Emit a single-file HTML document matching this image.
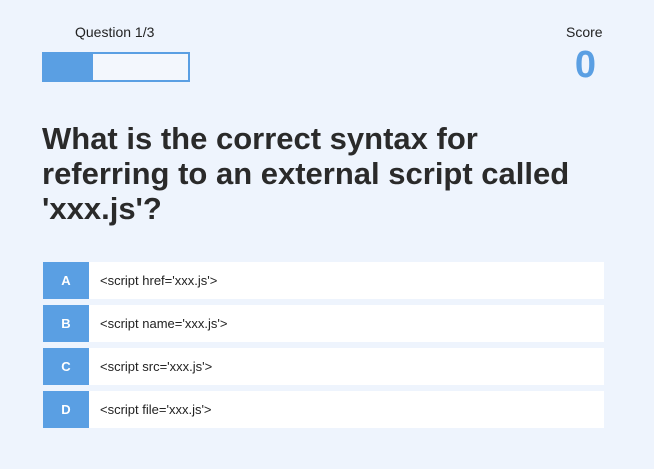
<!DOCTYPE html>
<html><head><style>
body{margin:0;width:654px;height:469px;background:#eef4fd;font-family:"Liberation Sans",sans-serif;position:relative;overflow:hidden}
.ql{position:absolute;left:75px;top:24px;font-size:14px;color:#222}
.bar{position:absolute;left:42px;top:52px;width:144px;height:26px;border:2px solid #5a9fe3;background:#f3f7fd}
.fill{width:49px;height:26px;background:#5a9fe3}
.sl{position:absolute;left:566px;top:24px;font-size:14px;color:#222}
.sv{position:absolute;left:566px;top:44px;width:39px;text-align:center;font-size:38px;font-weight:bold;color:#5a9fe3}
.q{position:absolute;left:42px;top:121px;font-size:31px;font-weight:bold;line-height:35px;color:#2a2a2a;width:600px;white-space:nowrap}
.opt{position:absolute;left:43px;width:561px;height:37px;background:#fff;font-size:13px;color:#222}
.opt b{position:absolute;left:0;top:0;width:46px;height:37px;background:#5a9fe3;color:#fff;text-align:center;line-height:37px;font-size:13px}
.opt span{position:absolute;left:57px;line-height:37px}
</style></head><body>
<div class="ql">Question 1/3</div>
<div class="bar"><div class="fill"></div></div>
<div class="sl">Score</div>
<div class="sv">0</div>
<div class="q">What is the correct syntax for<br>referring to an external script called<br>'xxx.js'?</div>
<div class="opt" style="top:262px"><b>A</b><span>&lt;script href='xxx.js'&gt;</span></div>
<div class="opt" style="top:305px"><b>B</b><span>&lt;script name='xxx.js'&gt;</span></div>
<div class="opt" style="top:348px"><b>C</b><span>&lt;script src='xxx.js'&gt;</span></div>
<div class="opt" style="top:391px"><b>D</b><span>&lt;script file='xxx.js'&gt;</span></div>
</body></html>
